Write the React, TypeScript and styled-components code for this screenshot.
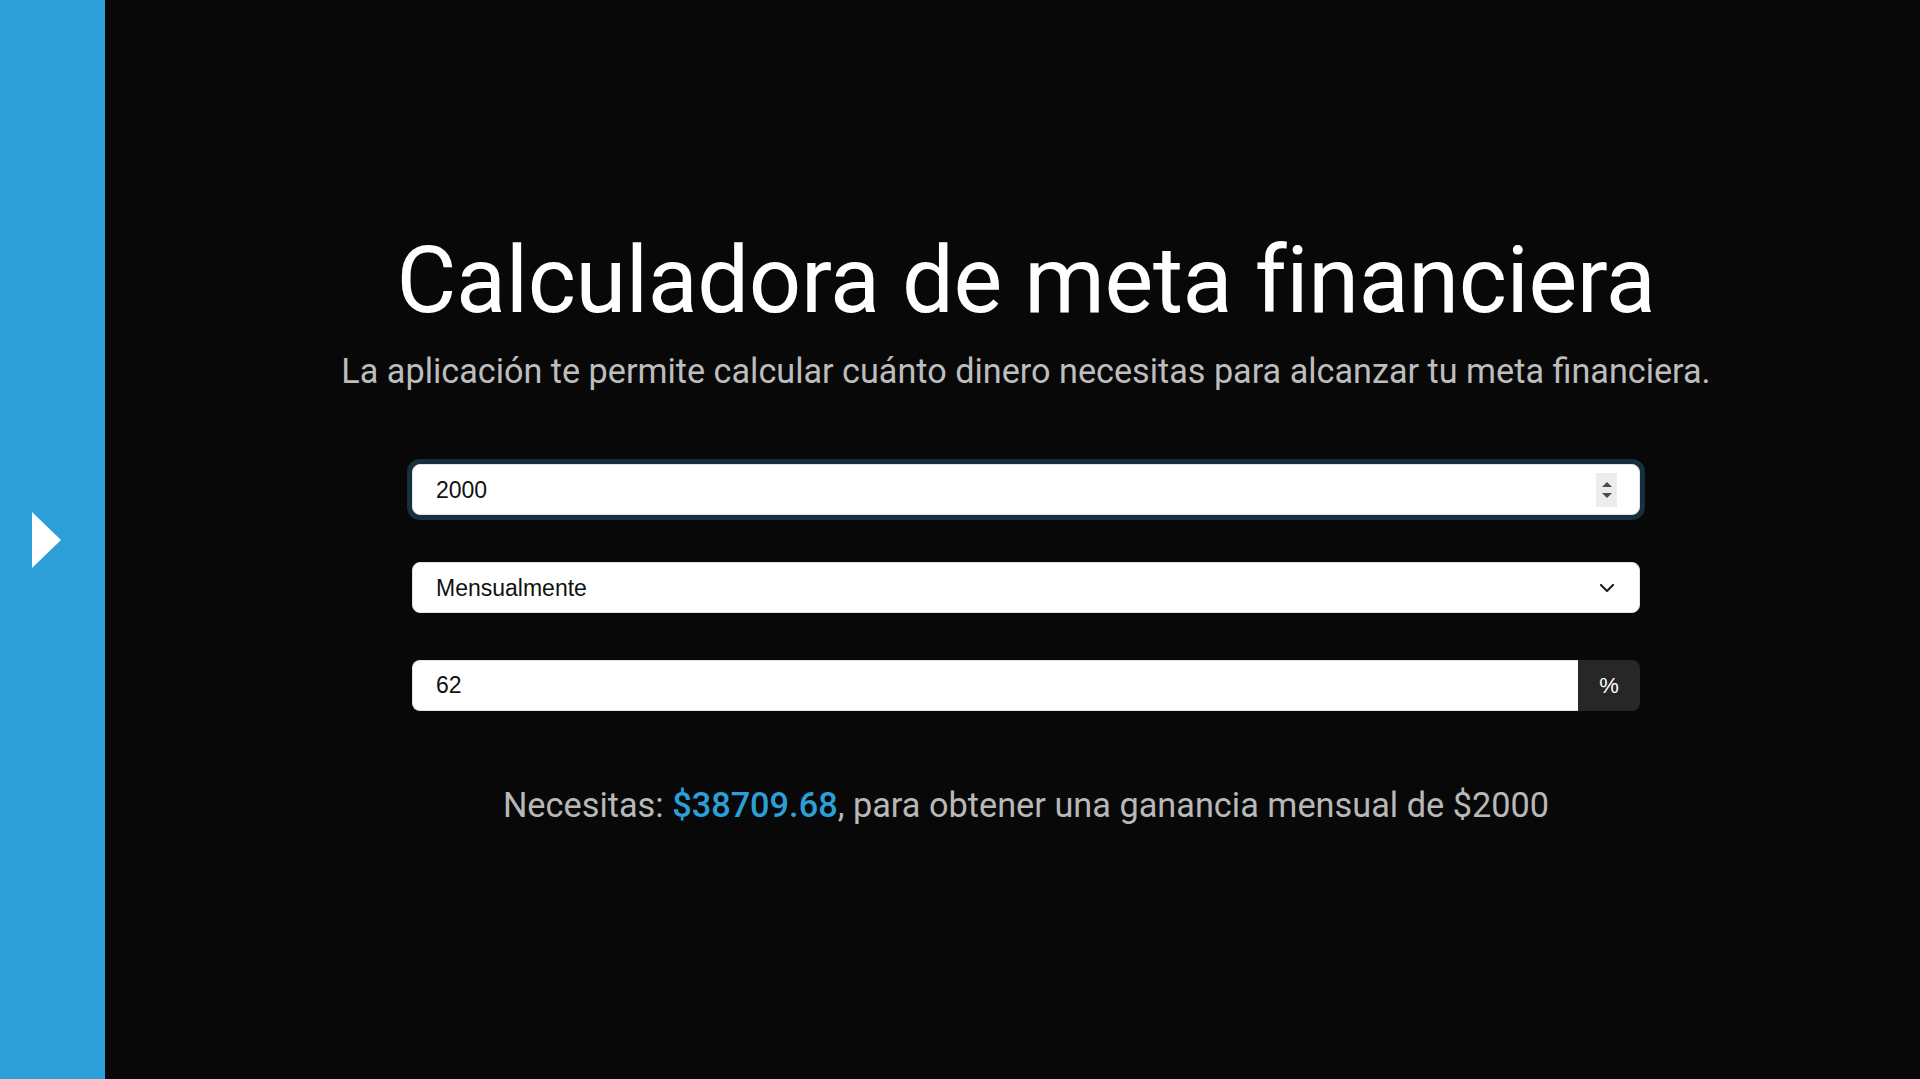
import React, { useState } from "react";
import styled, { createGlobalStyle } from "styled-components";

const Global = createGlobalStyle`
  html, body { margin: 0; padding: 0; background: #080808; }
  body { font-family: Roboto, "Liberation Sans", sans-serif; }
  * { box-sizing: border-box; }
`;

const Page = styled.div`
  display: flex;
  width: 1920px;
  height: 1079px;
  background: #080808;
  overflow: hidden;
`;

const Sidebar = styled.aside`
  width: 105px;
  flex: 0 0 105px;
  background: #2c9fd8;
  display: flex;
  align-items: center;
  padding-left: 32px;
`;

const Toggle = styled.button`
  border: 0;
  padding: 0;
  background: transparent;
  width: 0;
  height: 0;
  border-top: 28.5px solid transparent;
  border-bottom: 28.5px solid transparent;
  border-left: 29px solid #ffffff;
  cursor: pointer;
`;

const Main = styled.main`
  flex: 1;
  display: flex;
  flex-direction: column;
  align-items: center;
  padding: 226px 0 0 27px;
`;

const Title = styled.h1`
  margin: 0;
  font-family: Roboto, sans-serif;
  font-weight: 400;
  font-size: 92px;
  line-height: 110px;
  color: #ffffff;
  letter-spacing: -0.4px;
`;

const Subtitle = styled.p`
  margin: 15px 0 0;
  font-family: Roboto, sans-serif;
  font-size: 34.2px;
  line-height: 40px;
  color: #bdbdbd;
`;

const Form = styled.div`
  width: 1228px;
  margin-top: 73px;
  display: flex;
  flex-direction: column;
  gap: 47px;
`;

const fieldBase = `
  height: 51px;
  border: 1px solid #dee2e6;
  background: #ffffff;
  color: #111111;
  font-family: "Liberation Sans", Arial, sans-serif;
  font-size: 23px;
  outline: none;
`;

const NumberBox = styled.div<{ $focused?: boolean }>`
  ${fieldBase}
  display: flex;
  align-items: center;
  border-radius: 8px;
  padding: 0 22px 0 23px;
  box-shadow: ${(p) => (p.$focused ? "0 0 0 5px #16303f" : "none")};
`;

const NumberInput = styled.input`
  flex: 1;
  border: 0;
  outline: none;
  background: transparent;
  font: inherit;
  color: inherit;
  padding: 2px 0 0;
  -moz-appearance: textfield;
  &::-webkit-outer-spin-button,
  &::-webkit-inner-spin-button { -webkit-appearance: none; margin: 0; }
`;

const Spinner = styled.div`
  width: 21px;
  height: 34px;
  background: #ececec;
  display: flex;
  flex-direction: column;
  align-items: center;
  justify-content: center;
  gap: 6px;
`;

const Arrow = styled.span<{ $up?: boolean }>`
  width: 0;
  height: 0;
  border-left: 5px solid transparent;
  border-right: 5px solid transparent;
  ${(p) => (p.$up ? "border-bottom: 5px solid #4a4a4a;" : "border-top: 5px solid #4a4a4a;")}
`;

const SelectWrap = styled.div`
  ${fieldBase}
  position: relative;
  border-radius: 8px;
  display: flex;
  align-items: center;
`;

const Select = styled.select`
  appearance: none;
  -webkit-appearance: none;
  border: 0;
  outline: none;
  background: transparent;
  width: 100%;
  height: 100%;
  padding: 0 60px 0 23px;
  font: inherit;
  color: inherit;
`;

const Chevron = styled.svg`
  position: absolute;
  right: 24px;
  top: 50%;
  transform: translateY(-50%);
  pointer-events: none;
`;

const Group = styled.div`
  display: flex;
  height: 51px;
`;

const GroupInput = styled.input`
  ${fieldBase}
  flex: 1;
  border-radius: 8px 0 0 8px;
  border-right: 0;
  padding: 0 23px;
`;

const Addon = styled.span`
  width: 62px;
  flex: 0 0 62px;
  background: #272727;
  color: #ffffff;
  border-radius: 0 8px 8px 0;
  display: flex;
  align-items: center;
  justify-content: center;
  font-family: "Liberation Sans", Arial, sans-serif;
  font-size: 22px;
`;

const Result = styled.p`
  margin: 74px 0 0;
  font-family: Roboto, sans-serif;
  font-size: 34.3px;
  line-height: 40px;
  color: #b8b8b8;
`;

const Amount = styled.strong`
  color: #2c9fd8;
  font-weight: 500;
`;

export default function App() {
  const [amount, setAmount] = useState("2000");
  const [period, setPeriod] = useState("mensual");
  const [rate, setRate] = useState("62");

  const a = parseFloat(amount) || 0;
  const r = parseFloat(rate) || 0;
  const yearly = period === "mensual" ? a * 12 : a;
  const needed = r > 0 ? (yearly / r) * 100 : 0;

  return (
    <Page>
      <Global />
      <Sidebar>
        <Toggle aria-label="Abrir menú" />
      </Sidebar>
      <Main>
        <Title>Calculadora de meta financiera</Title>
        <Subtitle>
          La aplicación te permite calcular cuánto dinero necesitas para alcanzar tu meta financiera.
        </Subtitle>
        <Form>
          <NumberBox $focused>
            <NumberInput
              type="number"
              value={amount}
              onChange={(e) => setAmount(e.target.value)}
            />
            <Spinner>
              <Arrow $up />
              <Arrow />
            </Spinner>
          </NumberBox>
          <SelectWrap>
            <Select value={period} onChange={(e) => setPeriod(e.target.value)}>
              <option value="mensual">Mensualmente</option>
              <option value="anual">Anualmente</option>
            </Select>
            <Chevron width="16" height="10" viewBox="0 0 16 10" fill="none">
              <path d="M2 2l6 6 6-6" stroke="#222" strokeWidth="2.2" strokeLinecap="round" strokeLinejoin="round" />
            </Chevron>
          </SelectWrap>
          <Group>
            <GroupInput value={rate} onChange={(e) => setRate(e.target.value)} />
            <Addon>%</Addon>
          </Group>
        </Form>
        <Result>
          Necesitas: <Amount>${needed.toFixed(2)}</Amount>, para obtener una ganancia{" "}
          {period === "mensual" ? "mensual" : "anual"} de ${a}
        </Result>
      </Main>
    </Page>
  );
}
